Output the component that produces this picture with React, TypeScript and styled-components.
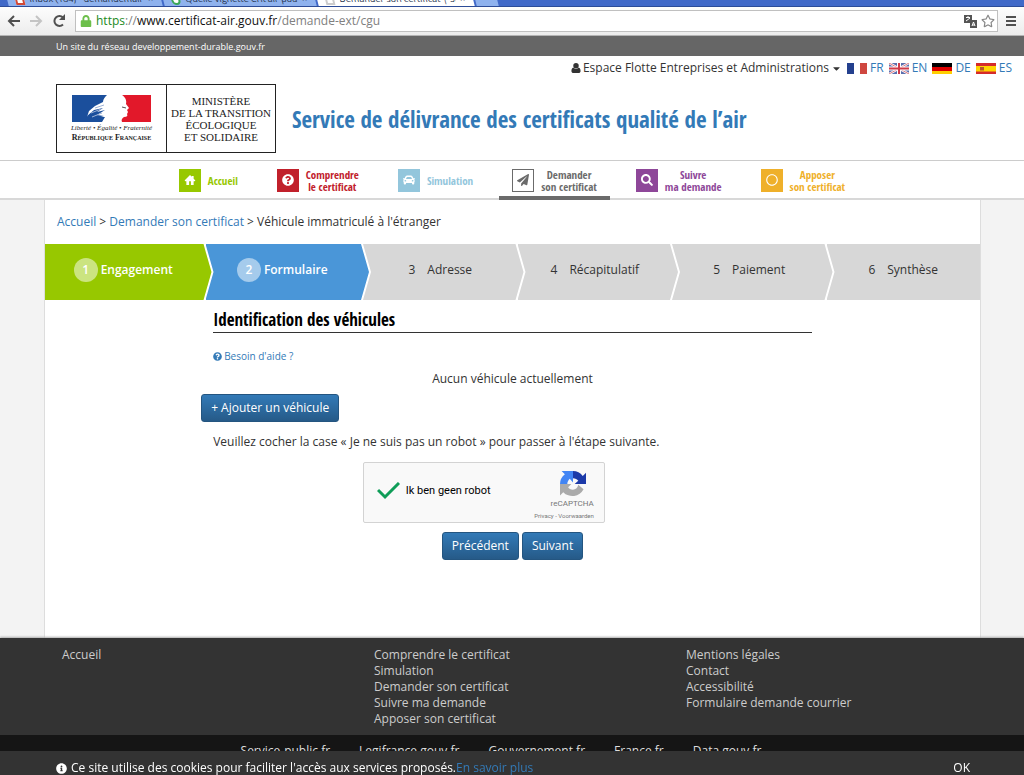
import React from "react";
import styled, { createGlobalStyle } from "styled-components";
import {
  FaQuestionCircle,
  FaCar,
  FaPaperPlane,
  FaSearch,
  FaRegCircle,
  FaCaretDown,
  FaInfoCircle,
  FaLock,
  FaRegStar,
} from "react-icons/fa";

const sans = `"Open Sans", "Noto Sans", sans-serif`;
const condensed = `"Open Sans Condensed", "Noto Sans Condensed", "Roboto Condensed", "Liberation Sans Narrow", "Open Sans", sans-serif`;

const Global = createGlobalStyle`
  * { box-sizing: border-box; }
  body { margin: 0; background: #f3f3f3; font: 12px/16px ${sans}; color: #333; }
  a { color: #337ab7; text-decoration: none; }
  ul, ol { list-style: none; margin: 0; padding: 0; }
  button { cursor: pointer; }
`;

const Page = styled.div`
  display: flex;
  flex-direction: column;
  height: 100vh;
  min-height: 700px;
  overflow: hidden;
`;

/* Browser chrome */
const TabStrip = styled.div`
  display: flex;
  gap: 2px;
  height: 7px;
  padding-left: 8px;
  background: #4069c8;
  border-bottom: 1px solid #2c4c98;
  overflow: hidden;
`;
const Tab = styled.div<{ $active?: boolean; $width: number }>`
  display: flex;
  align-items: flex-end;
  gap: 5px;
  flex: 0 0 ${(p) => p.$width}px;
  min-width: 0;
  height: 6px;
  padding: 0 8px 1px;
  font-size: 9px;
  line-height: 12px;
  white-space: nowrap;
  color: #26334d;
  background: ${(p) => (p.$active ? "#fff" : "#8fb2ee")};
  transform: skewX(14deg);
  span { flex: 1; overflow: hidden; }
`;
const Favicon = styled.i<{ $color: string; $round?: boolean }>`
  width: 9px;
  height: 9px;
  border: 2px solid ${(p) => p.$color};
  border-radius: ${(p) => (p.$round ? "50%" : "0")};
  background: #fff;
`;
const Toolbar = styled.div`
  display: flex;
  align-items: center;
  height: 29px;
  padding: 0 8px 0 7px;
  gap: 8px;
  background: linear-gradient(#fdfdfd, #ececec);
  border-bottom: 1px solid #b4b4b4;
`;
const ToolButton = styled.button`
  display: flex;
  padding: 0;
  border: 0;
  background: none;
`;
const AddressBar = styled.div`
  display: flex;
  align-items: center;
  gap: 4px;
  flex: 1;
  height: 22px;
  padding: 0 2px 0 4px;
  border: 1px solid #c0c0c0;
  background: #fff;
`;
const Url = styled.span`
  flex: 1;
  font-size: 12px;
  color: #808080;
  b { font-weight: 400; color: #1c8a1c; }
  strong { font-weight: 400; color: #111; }
`;

/* Site header */
const NetworkBar = styled.div`
  height: 20px;
  padding-left: 56px;
  background: #666;
  color: #fff;
  font-size: 9px;
  line-height: 21px;
`;
const Header = styled.header`
  height: 104px;
  padding: 4px 12px 0 56px;
  background: #fff;
`;
const UserRow = styled.div`
  display: flex;
  justify-content: flex-end;
  align-items: center;
  gap: 5px;
  height: 16px;
`;
const AccountButton = styled.button`
  display: flex;
  align-items: center;
  gap: 2px;
  padding: 0;
  border: 0;
  background: none;
  font: 12px/16px ${sans};
  color: #333;
`;
const LangLink = styled.a`
  display: flex;
  align-items: center;
  gap: 3px;
`;
const Brand = styled.div`
  display: flex;
  align-items: center;
  gap: 16px;
  margin-top: 8px;
`;
const Logo = styled.div`
  display: grid;
  grid-template-columns: 110px 108px;
  width: 220px;
  height: 69px;
  border: 1px solid #222;
  font-family: "Liberation Serif", serif;
  color: #222;
`;
const Republic = styled.div`
  display: flex;
  flex-direction: column;
  align-items: center;
  padding-top: 10px;
  border-right: 1px solid #222;
  white-space: nowrap;
  em { margin-top: 2px; font-size: 7px; line-height: 9px; }
  strong { font-size: 8px; line-height: 10px; font-variant: small-caps; }
`;
const Ministry = styled.div`
  align-self: center;
  font-size: 11px;
  line-height: 12px;
  text-align: center;
  white-space: nowrap;
`;
const SiteTitle = styled.h1`
  margin: 0;
  font: 700 23px/28px ${condensed};
  color: #337ab7;
  white-space: nowrap;
`;

const Nav = styled.nav`
  display: flex;
  justify-content: center;
  gap: 13px;
  height: 40px;
  background: #fff;
  border-top: 1px solid #ccc;
  border-bottom: 2px solid #d8d8d8;
`;
const NavItem = styled.a<{ $color: string; $active?: boolean }>`
  display: flex;
  align-items: center;
  gap: 7px;
  height: 39px;
  padding: 3px 13px 0;
  border-bottom: 4px solid ${(p) => (p.$active ? p.$color : "transparent")};
  font: 700 11px/12px ${condensed};
  text-align: center;
  white-space: nowrap;
  color: ${(p) => p.$color};
`;
const NavIcon = styled.span<{ $color: string; $outline?: boolean }>`
  display: flex;
  align-items: center;
  justify-content: center;
  width: 22px;
  height: 23px;
  font-size: 12px;
  border: 1px solid ${(p) => p.$color};
  background: ${(p) => (p.$outline ? "#fff" : p.$color)};
  color: ${(p) => (p.$outline ? p.$color : "#fff")};
`;
const NavLabel = styled.span`
  display: flex;
  flex-direction: column;
  padding-top: 2px;
`;

/* Main column */
const Main = styled.main`
  flex: 1 0 auto;
  margin: 0 43px 0 44px;
  background: #fff;
  border: solid #ddd;
  border-width: 0 1px;
`;
const Breadcrumb = styled.nav`
  padding-left: 12px;
  line-height: 44px;
`;
const Steps = styled.ol`
  display: flex;
  height: 56px;
`;
const stepColors = { done: "#97c800", current: "#4a96d8", next: "#d7d7d7" };
type StepState = keyof typeof stepColors;
const Step = styled.li<{ $state: StepState; $first: boolean; $last: boolean }>`
  display: flex;
  justify-content: center;
  align-items: center;
  gap: ${(p) => (p.$state === "next" ? 12 : 3)}px;
  flex: 1 1 ${(p) => (p.$first ? 13 : p.$last ? 0 : 7)}px;
  margin-right: ${(p) => (p.$last ? 0 : -6)}px;
  padding: 0 ${(p) => (p.$last ? 0 : p.$state === "next" ? 6 : 10)}px 4px 0;
  font-weight: ${(p) => (p.$state === "next" ? 500 : 600)};
  color: ${(p) => (p.$state === "next" ? "#333" : "#fff")};
  background: ${(p) => stepColors[p.$state]};
  clip-path: polygon(
    0 0,
    calc(100% - ${(p) => (p.$last ? 0 : 8)}px) 0,
    100% 50%,
    calc(100% - ${(p) => (p.$last ? 0 : 8)}px) 100%,
    0 100%,
    ${(p) => (p.$first ? 0 : 8)}px 50%
  );
`;
const StepNumber = styled.span<{ $bubble: boolean }>`
  width: ${(p) => (p.$bubble ? "24px" : "auto")};
  border-radius: 50%;
  line-height: 24px;
  text-align: center;
  background: ${(p) => (p.$bubble ? "rgba(255, 255, 255, 0.5)" : "none")};
`;
const Content = styled.section`
  display: flex;
  flex-direction: column;
  width: 66.6%;
  margin: 0 auto;
  padding: 8px 12px 0;
`;
const SectionTitle = styled.h2`
  margin: 0;
  border-bottom: 1px solid #333;
  font: 700 17px/24px ${condensed};
  color: #000;
`;
const HelpLink = styled.a`
  display: flex;
  align-items: center;
  gap: 2px;
  margin-top: 15px;
  font-size: 10px;
`;
const Empty = styled.p`
  margin: 7px 0;
  text-align: center;
`;
const Button = styled.button`
  height: 28px;
  padding: 0 9px;
  border: 1px solid #245580;
  border-radius: 3px;
  background: linear-gradient(#337ab7, #265a88);
  font: 12px/16px ${sans};
  color: #fff;
`;
const AddButton = styled(Button)`
  align-self: flex-start;
  margin-left: -12px;
`;
const Note = styled.p`
  margin: 12px 0;
`;
const Captcha = styled.div`
  display: flex;
  justify-content: space-between;
  width: 242px;
  height: 61px;
  margin-left: 25%;
  padding: 8px 10px 0 13px;
  border: 1px solid #d3d3d3;
  border-radius: 2px;
  background: #f9f9f9;
  font-family: Roboto, sans-serif;
`;
const CaptchaLabel = styled.label`
  display: flex;
  align-items: center;
  gap: 6px;
  height: 40px;
  color: #000;
  font-size: 11px;
`;
const HiddenCheckbox = styled.input`
  position: absolute;
  opacity: 0;
`;
const CaptchaBrand = styled.div`
  display: flex;
  flex-direction: column;
  align-items: flex-end;
  font-size: 8px;
  line-height: 13px;
  color: #777;
  svg { margin-right: 8px; }
  small { font-size: 6px; line-height: 12px; }
`;
const Actions = styled.div`
  display: flex;
  justify-content: center;
  gap: 3px;
  margin-top: 9px;
`;

/* Footer */
const Footer = styled.footer`
  background: #333;
  box-shadow: 0 -1px 2px #aaa;
`;
const FooterLinks = styled.div`
  display: grid;
  grid-template-columns: repeat(3, 1fr);
  height: 97px;
  padding: 9px 26px 0 62px;
  a { color: #ccc; }
`;
const Partners = styled.div`
  display: flex;
  justify-content: center;
  gap: 29px;
  height: 40px;
  padding: 8px 22px 0 0;
  background: #151515;
  a { color: #ddd; }
`;
const CookieBar = styled.div`
  position: fixed;
  inset: auto 0 0;
  display: flex;
  align-items: center;
  height: 24px;
  padding: 10px 54px 0 56px;
  background: #333;
  color: #fff;
  svg { margin-right: 4px; }
`;
const OkButton = styled.button`
  margin-left: auto;
  padding: 0;
  border: 0;
  background: none;
  font: 12px/16px ${sans};
  color: #fff;
`;

const Flag = ({ code }: { code: string }) => (
  <svg width="20" height="11" viewBox="0 0 20 11" aria-hidden="true">
    {code === "FR" && (
      <>
        <path fill="#fff" d="M0 0h20v11H0z" />
        <path fill="#24408e" d="M0 0h7v11H0z" />
        <path fill="#cf4740" d="M13 0h7v11h-7z" />
      </>
    )}
    {code === "EN" && (
      <>
        <path fill="#5b6fae" d="M0 0h20v11H0z" />
        <path stroke="#fff" strokeWidth="2.4" d="M0 0l20 11M20 0L0 11" />
        <path stroke="#d2555f" strokeWidth="0.8" d="M0 0l20 11M20 0L0 11" />
        <path stroke="#fff" strokeWidth="4" d="M10 0v11M0 5.5h20" />
        <path stroke="#d03a48" strokeWidth="2" d="M10 0v11M0 5.5h20" />
      </>
    )}
    {code === "DE" && (
      <>
        <path fill="#000" d="M0 0h20v4H0z" />
        <path fill="#dd0000" d="M0 4h20v4H0z" />
        <path fill="#ffce00" d="M0 8h20v3H0z" />
      </>
    )}
    {code === "ES" && (
      <>
        <path fill="#d52b2b" d="M0 0h20v11H0z" />
        <path fill="#ffd500" d="M0 3h20v5.500H0z" />
        <path fill="#b5562b" d="M4 4h4v3.500H4z" />
      </>
    )}
  </svg>
);

const MarianneFlag = () => (
  <svg width="79" height="27" viewBox="0 0 79 27" aria-hidden="true">
    <path fill="#1b4f9c" d="M0 0h35c-2 2-4 4-4 7l-8 4-6 5-2 6h18l-3 5H0z" />
    <path fill="#e2182a" d="M50 0h29v27H50c-1-2 0-4 2-5 3 0 4-1 3-3l1-2-1-2 2-2-3-4c1-4-1-7-4-9z" />
    <path fill="#1b4f9c" d="M15 21l7-6 9-2-6 4 8-2-8 5 7 1-6 2 4 1-5 3h-9z" />
    <path fill="none" stroke="#9fb3d6" strokeWidth="1" d="M23 13l9-3M19 18l10-4M20 22l10-4" />
    <path fill="none" stroke="#555" strokeWidth="1" d="M50 12l4 1" />
  </svg>
);

const RecaptchaMark = () => (
  <svg width="26" height="26" viewBox="0 0 64 64" aria-hidden="true">
    <path fill="#1c3aa9" d="M64 32V4l-8 8A31 31 0 0 0 32 0v18c6 0 10 3 13 6l-9 8z" />
    <path fill="#4285f4" d="M32 0H4l8 8A31 31 0 0 0 0 32h18c0-6 3-10 6-13l8 9z" />
    <path fill="#ababab" d="M0 32v28l8-8a31 31 0 0 0 50-7L45 34c-2 8-7 12-13 12s-10-2-12-6l8-8z" />
  </svg>
);

const HouseIcon = () => (
  <svg width="12" height="10" viewBox="0 0 12 11" fill="currentColor" aria-hidden="true">
    <path d="M6 0l2 2V1h2v3l2 2-1 1h-1v4H7V7H5v4H2V7H1L0 6z" />
  </svg>
);

const PersonIcon = () => (
  <svg width="10" height="10" viewBox="0 0 10 11" fill="currentColor" aria-hidden="true">
    <circle cx="5" cy="3" r="3" />
    <path d="M2 5c-2 1-2 3-2 4 0 1 1 2 2 2h6c1 0 2-1 2-2 0-1 0-3-2-4-2 2-4 2-6 0z" />
  </svg>
);

const navItems = [
  { lines: ["Accueil"], color: "#97c800", Icon: HouseIcon },
  { lines: ["Comprendre", "le certificat"], color: "#c1202b", Icon: FaQuestionCircle },
  { lines: ["Simulation"], color: "#93c6dc", Icon: FaCar },
  { lines: ["Demander", "son certificat"], color: "#6b6b6b", Icon: FaPaperPlane, active: true },
  { lines: ["Suivre", "ma demande"], color: "#8e4799", Icon: FaSearch },
  { lines: ["Apposer", "son certificat"], color: "#efb02a", Icon: FaRegCircle },
];

const steps = ["Engagement", "Formulaire", "Adresse", "Récapitulatif", "Paiement", "Synthèse"];

const footerColumns = [
  ["Accueil"],
  ["Comprendre le certificat", "Simulation", "Demander son certificat", "Suivre ma demande", "Apposer son certificat"],
  ["Mentions légales", "Contact", "Accessibilité", "Formulaire demande courrier"],
];

const partners = ["Service-public.fr", "Legifrance.gouv.fr", "Gouvernement.fr", "France.fr", "Data.gouv.fr"];

const Arrow = ({ back }: { back?: boolean }) => (
  <svg width="14" height="14" viewBox="0 0 14 14" fill="none" stroke={back ? "#505050" : "#c4c4c4"} strokeWidth="2">
    <path d={back ? "M13 7H2M7 2L2 7l5 5" : "M1 7h11M7 2l5 5-5 5"} />
  </svg>
);

export default function App() {
  return (
    <Page>
      <Global />
      <TabStrip>
        <Tab $width={154}>
          <Favicon $color="#d14836" />
          <span>Inbox (184) - demandemail</span>×
        </Tab>
        <Tab $width={152}>
          <Favicon $color="#3aa757" $round />
          <span>Quelle vignette Crit'air pour l</span>×
        </Tab>
        <Tab $width={156} $active>
          <Favicon $color="#ccc" />
          <span>Demander son certificat | Se</span>×
        </Tab>
        <Tab $width={22} />
      </TabStrip>
      <Toolbar>
        <ToolButton aria-label="Précédente">
          <Arrow back />
        </ToolButton>
        <ToolButton aria-label="Suivante">
          <Arrow />
        </ToolButton>
        <ToolButton aria-label="Actualiser">
          <svg width="16" height="14" viewBox="0 0 16 14" fill="none" stroke="#505050" strokeWidth="2">
            <path d="M12 10.500A5 5 0 1 1 12 3.500" />
            <path fill="#505050" stroke="none" d="M14 0v6H8z" />
          </svg>
        </ToolButton>
        <AddressBar>
          <FaLock size={12} color="#6cbf4b" />
          <Url>
            <b>https</b>://<strong>www.certificat-air.gouv.fr</strong>/demande-ext/cgu
          </Url>
          <svg width="13" height="13" viewBox="0 0 13 13" aria-hidden="true">
            <path fill="#555" d="M0 0h8v8H0zM6 5h7v8H6z" />
            <path fill="none" stroke="#fff" d="M2 2.500h4M4 1v2M2 6l4-3M8 11l1.500-4 1.500 4M8.500 10h2" />
          </svg>
          <FaRegStar size={14} color="#888" />
        </AddressBar>
        <ToolButton aria-label="Menu">
          <svg width="10" height="10" viewBox="0 0 10 10" fill="#505050">
            <path d="M0 0h10v2H0zM0 4h10v2H0zM0 8h10v2H0z" />
          </svg>
        </ToolButton>
      </Toolbar>

      <NetworkBar>Un site du réseau developpement-durable.gouv.fr</NetworkBar>
      <Header>
        <UserRow>
          <AccountButton>
            <PersonIcon />
            Espace Flotte Entreprises et Administrations
            <FaCaretDown size={11} />
          </AccountButton>
          {["FR", "EN", "DE", "ES"].map((code) => (
            <LangLink href="#" key={code}>
              <Flag code={code} />
              {code}
            </LangLink>
          ))}
        </UserRow>
        <Brand>
          <Logo>
            <Republic>
              <MarianneFlag />
              <em>Liberté • Égalité • Fraternité</em>
              <strong>République Française</strong>
            </Republic>
            <Ministry>
              MINISTÈRE
              <br />
              DE LA TRANSITION
              <br />
              ÉCOLOGIQUE
              <br />
              ET SOLIDAIRE
            </Ministry>
          </Logo>
          <SiteTitle>Service de délivrance des certificats qualité de l’air</SiteTitle>
        </Brand>
      </Header>
      <Nav>
        {navItems.map(({ lines, color, Icon, active }) => (
          <NavItem href="#" key={lines.join()} $color={color} $active={active}>
            <NavIcon $color={color} $outline={active}>
              <Icon />
            </NavIcon>
            <NavLabel>
              {lines.map((line) => (
                <span key={line}>{line}</span>
              ))}
            </NavLabel>
          </NavItem>
        ))}
      </Nav>

      <Main>
        <Breadcrumb>
          <a href="#">Accueil</a> &gt; <a href="#">Demander son certificat</a> &gt; Véhicule immatriculé à l'étranger
        </Breadcrumb>
        <Steps>
          {steps.map((label, i) => (
            <Step
              key={label}
              $state={i === 0 ? "done" : i === 1 ? "current" : "next"}
              $first={i === 0}
              $last={i === steps.length - 1}
            >
              <StepNumber $bubble={i < 2}>{i + 1}</StepNumber>
              {label}
            </Step>
          ))}
        </Steps>
        <Content>
          <SectionTitle>Identification des véhicules</SectionTitle>
          <HelpLink href="#">
            <FaQuestionCircle size={9} />
            Besoin d'aide ?
          </HelpLink>
          <Empty>Aucun véhicule actuellement</Empty>
          <AddButton>+ Ajouter un véhicule</AddButton>
          <Note>Veuillez cocher la case « Je ne suis pas un robot » pour passer à l'étape suivante.</Note>
          <Captcha>
            <CaptchaLabel>
              <HiddenCheckbox type="checkbox" defaultChecked />
              <svg width="23" height="18" viewBox="0 0 23 18" fill="none" stroke="#0f9d58" strokeWidth="3">
                <path d="M1 8l7 7L22 1" />
              </svg>
              Ik ben geen robot
            </CaptchaLabel>
            <CaptchaBrand>
              <RecaptchaMark />
              <span>reCAPTCHA</span>
              <small>Privacy - Voorwaarden</small>
            </CaptchaBrand>
          </Captcha>
          <Actions>
            <Button>Précédent</Button>
            <Button>Suivant</Button>
          </Actions>
        </Content>
      </Main>

      <Footer>
        <FooterLinks>
          {footerColumns.map((column) => (
            <ul key={column[0]}>
              {column.map((link) => (
                <li key={link}>
                  <a href="#">{link}</a>
                </li>
              ))}
            </ul>
          ))}
        </FooterLinks>
        <Partners>
          {partners.map((name) => (
            <a href="#" key={name}>
              {name}
            </a>
          ))}
        </Partners>
      </Footer>
      <CookieBar>
        <FaInfoCircle size={11} />
        Ce site utilise des cookies pour faciliter l'accès aux services proposés.
        <a href="#">En savoir plus</a>
        <OkButton>OK</OkButton>
      </CookieBar>
    </Page>
  );
}
